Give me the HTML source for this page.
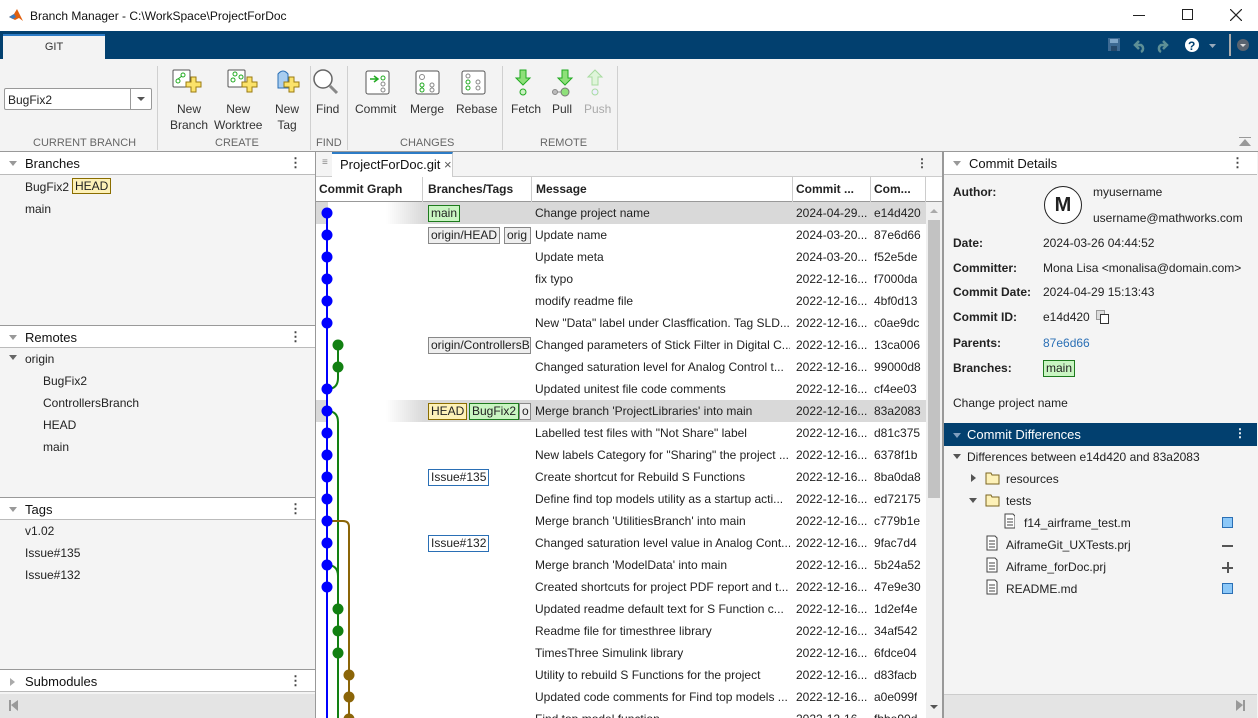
<!DOCTYPE html>
<html><head><meta charset="utf-8"><style>
*{box-sizing:border-box;margin:0;padding:0}
body{width:1258px;height:718px;overflow:hidden;background:#f4f4f4;font-family:"Liberation Sans",sans-serif;font-size:12px;color:#222;position:relative}
.a{position:absolute;white-space:nowrap}
.hdr{position:absolute;background:#fff;border-bottom:1px solid #bbb;height:23px;font-size:13px;color:#111}
.hdr .t{position:absolute;left:25px;top:4px}
.hdr .tri{position:absolute;left:9px;top:9px;width:0;height:0;border-left:4px solid transparent;border-right:4px solid transparent;border-top:5px solid #999}
.hdr .dots{position:absolute;right:14px;top:3px;font-weight:bold;font-size:13px;color:#444;letter-spacing:-1px}
.tb{font-size:12px;text-align:center;color:#333;line-height:16px}
.sec{font-size:11px;color:#666;top:137px}
.sep{position:absolute;top:66px;width:1px;height:84px;background:#d0d0d0}
.row{position:absolute;left:423px;width:503px;height:22px}
.row span{position:absolute;top:4px;white-space:nowrap;overflow:hidden}
.m{left:112px;width:255px}
.d{left:373px}
.i{left:451px}
.tag{position:absolute;top:3px;height:17px;padding:0 2px;border:1px solid #888;background:#eee;line-height:15px;font-size:12px;white-space:nowrap;overflow:hidden}
.g{background:#c9f5c2;border-color:#1d7a1d}
.y{background:#fdf1b8;border-color:#8a6d00}
.b{background:#fff;border-color:#2a6fb5}
.lbl{font-weight:bold;color:#222;font-size:12px}
</style></head><body>
<!-- title bar -->
<div class="a" style="left:0;top:0;width:1258px;height:31px;background:#fff"></div>
<svg class="a" style="left:8px;top:7px" width="16" height="16" viewBox="0 0 16 16"><path d="M1 10 L6 7 L9 2 L15 14 L11 11 L7 13 Z" fill="#e06010"/><path d="M1 10 L6 7 L8 10 L5 12Z" fill="#3a7bbf"/></svg>
<div class="a" style="left:30px;top:9px;font-size:12px;color:#111">Branch Manager - C:\WorkSpace\ProjectForDoc</div>
<div class="a" style="left:1133px;top:15px;width:12px;height:1px;background:#222"></div>
<div class="a" style="left:1182px;top:9px;width:11px;height:11px;border:1px solid #222"></div>
<svg class="a" style="left:1230px;top:9px" width="12" height="12"><path d="M0 0L12 12M12 0L0 12" stroke="#222" stroke-width="1.2"/></svg>
<!-- blue ribbon -->
<div class="a" style="left:0;top:31px;width:1258px;height:28px;background:#02406f"></div>
<div class="a" style="left:3px;top:34px;width:102px;height:25px;background:#f3f3f3;border-top:2px solid #2d7cc6;text-align:center;line-height:22px;font-size:11px;color:#333">GIT</div>
<svg class="a" style="left:1107px;top:37px" width="120" height="16">
<rect x="1" y="1" width="12" height="13" fill="#3d6a93"/><rect x="3" y="2" width="8" height="4" fill="#7fa6c8"/><rect x="4" y="9" width="6" height="5" fill="#25496b"/>
<path d="M32 4 l-4 4 4 4 M28 8 h6 a4 4 0 0 1 0 7" stroke="#5d8f96" stroke-width="2.5" fill="none"/>
<path d="M56 4 l4 4 -4 4 M60 8 h-6 a4 4 0 0 0 0 7" stroke="#5d8f96" stroke-width="2.5" fill="none"/>
<circle cx="85" cy="8" r="7" fill="#fff"/><text x="81" y="13" font-size="12" font-weight="bold" font-family="Liberation Sans" fill="#02406f">?</text>
<path d="M102 7 h7 l-3.5 4z" fill="#9ab"/>
</svg>
<div class="a" style="left:1229px;top:34px;width:2px;height:22px;background:#aaa"></div>
<div class="a" style="left:1237px;top:39px;width:12px;height:12px;border-radius:50%;background:#5a6470"></div>
<div class="a" style="left:1240px;top:44px;border-left:3px solid transparent;border-right:3px solid transparent;border-top:3px solid #ddd"></div>
<!-- toolstrip -->
<div class="a" style="left:0;top:59px;width:1258px;height:93px;background:#f3f3f3;border-bottom:1px solid #999"></div>
<div class="a" style="left:4px;top:88px;width:148px;height:22px;background:#fff;border:1px solid #999;border-radius:2px"></div>
<div class="a" style="left:8px;top:93px;font-size:12px">BugFix2</div>
<div class="a" style="left:130px;top:89px;width:1px;height:20px;background:#999"></div>
<div class="a" style="left:137px;top:97px;border-left:4px solid transparent;border-right:4px solid transparent;border-top:4px solid #555"></div>
<div class="sep" style="left:157px"></div><div class="sep" style="left:310px"></div><div class="sep" style="left:347px"></div><div class="sep" style="left:502px"></div><div class="sep" style="left:617px"></div>
<div class="a sec" style="left:33px">CURRENT BRANCH</div>
<div class="a sec" style="left:215px">CREATE</div>
<div class="a sec" style="left:316px">FIND</div>
<div class="a sec" style="left:400px">CHANGES</div>
<div class="a sec" style="left:540px">REMOTE</div>
<svg class="a" style="left:170px;top:68px" width="450" height="32" viewBox="0 0 450 32">
<g stroke="#555" fill="#fff"><rect x="3" y="2" width="17" height="17" rx="1"/><rect x="58" y="2" width="17" height="17" rx="1"/></g>
<g fill="none" stroke="#2a2"><circle cx="8" cy="13" r="2"/><circle cx="13" cy="7" r="2"/><path d="M8 11 L12 8"/><circle cx="65" cy="6" r="2"/><circle cx="71" cy="9" r="2"/><circle cx="63" cy="12" r="2"/></g>
<path d="M16 14h5v-5h5v5h5v5h-5v5h-5v-5h-5z" fill="#fbe26a" stroke="#9a7a10"/>
<path d="M16 14h5v-5h5v5h5v5h-5v5h-5v-5h-5z" fill="#fbe26a" stroke="#9a7a10" transform="translate(56,0)"/>
<path d="M108 6 q5-6 10 0 v14 h-10z" fill="#a8cdf0" stroke="#2a6fb5"/>
<path d="M16 14h5v-5h5v5h5v5h-5v5h-5v-5h-5z" fill="#fbe26a" stroke="#9a7a10" transform="translate(98,0)"/>
<circle cx="153" cy="11" r="9" fill="#fff" stroke="#666" stroke-width="1.5"/><path d="M160 18 l7 7" stroke="#888" stroke-width="3"/>
<g stroke="#555" fill="#fff"><rect x="196" y="3" width="23" height="23" rx="2"/><rect x="246" y="3" width="23" height="23" rx="2"/><rect x="292" y="3" width="23" height="23" rx="2"/></g>
<path d="M200 11 h7 M204 8 l4 3 -4 3" stroke="#2a2" fill="none" stroke-width="1.5"/>
<g fill="none" stroke="#2a2"><circle cx="213" cy="10" r="2"/><circle cx="252" cy="17" r="2"/><circle cx="252" cy="22" r="2"/><circle cx="298" cy="14" r="2"/><circle cx="298" cy="20" r="2"/></g>
<g fill="none" stroke="#888"><circle cx="213" cy="16" r="2"/><circle cx="213" cy="22" r="2"/><circle cx="252" cy="9" r="2.5"/><circle cx="262" cy="17" r="2"/><circle cx="262" cy="22" r="2"/><circle cx="298" cy="8" r="2"/><circle cx="308" cy="14" r="2"/><circle cx="308" cy="20" r="2"/></g>
<path d="M350 2 h6 v8 h4 l-7 7 -7-7 h4z" fill="#8ee07a" stroke="#2a2"/><circle cx="353" cy="24" r="3" fill="#c8f0c0" stroke="#2a2"/>
<path d="M392 2 h6 v8 h4 l-7 7 -7-7 h4z" fill="#8ee07a" stroke="#2a2"/><circle cx="395" cy="24" r="4" fill="#8ee07a" stroke="#777"/><circle cx="385" cy="24" r="2.5" fill="#bbb" stroke="#888"/><path d="M387 24 h4" stroke="#888"/>
<path d="M422 17 h6 v-8 h4 l-7 -7 -7 7 h4z" fill="#dff5da" stroke="#a8dba0"/><circle cx="425" cy="24" r="3" fill="#eef" stroke="#a8dba0"/>
</svg>
<div class="a tb" style="left:170px;top:101px">New<br>Branch</div>
<div class="a tb" style="left:214px;top:101px">New<br>Worktree</div>
<div class="a tb" style="left:275px;top:101px">New<br>Tag</div>
<div class="a tb" style="left:316px;top:101px">Find</div>
<div class="a tb" style="left:355px;top:101px">Commit</div>
<div class="a tb" style="left:410px;top:101px">Merge</div>
<div class="a tb" style="left:456px;top:101px">Rebase</div>
<div class="a tb" style="left:511px;top:101px">Fetch</div>
<div class="a tb" style="left:552px;top:101px">Pull</div>
<div class="a tb" style="left:584px;top:101px;color:#aaa">Push</div>
<div class="a" style="left:1239px;top:139px;border-left:6px solid transparent;border-right:6px solid transparent;border-bottom:7px solid #999"></div><div class="a" style="left:1239px;top:137px;width:12px;height:1px;background:#999"></div>

<!-- left panel -->
<div class="a" style="left:0;top:152px;width:316px;height:566px;background:#f4f4f4;border-right:1px solid #999"></div>
<div class="hdr" style="left:0;top:152px;width:315px"><div class="tri"></div><div class="t">Branches</div><div class="dots">⋮</div></div>
<div class="a" style="left:25px;top:180px">BugFix2</div><div class="tag y" style="left:72px;top:178px;height:16px;position:absolute">HEAD</div>
<div class="a" style="left:25px;top:202px">main</div>
<div class="hdr" style="left:0;top:325px;width:315px;border-top:1px solid #999"><div class="tri"></div><div class="t">Remotes</div><div class="dots">⋮</div></div>
<div class="a" style="left:9px;top:355px;border-left:4px solid transparent;border-right:4px solid transparent;border-top:5px solid #666"></div>
<div class="a" style="left:25px;top:352px">origin</div>
<div class="a" style="left:43px;top:374px">BugFix2</div>
<div class="a" style="left:43px;top:396px">ControllersBranch</div>
<div class="a" style="left:43px;top:418px">HEAD</div>
<div class="a" style="left:43px;top:440px">main</div>
<div class="hdr" style="left:0;top:497px;width:315px;border-top:1px solid #999"><div class="tri"></div><div class="t">Tags</div><div class="dots">⋮</div></div>
<div class="a" style="left:25px;top:524px">v1.02</div>
<div class="a" style="left:25px;top:546px">Issue#135</div>
<div class="a" style="left:25px;top:568px">Issue#132</div>
<div class="hdr" style="left:0;top:669px;width:315px;border-top:1px solid #999"><div class="a" style="left:10px;top:8px;border-top:4px solid transparent;border-bottom:4px solid transparent;border-left:5px solid #aaa"></div><div class="t">Submodules</div><div class="dots">⋮</div></div>
<div class="a" style="left:0;top:694px;width:315px;height:24px;background:#e4e4e4"></div>
<div class="a" style="left:9px;top:700px;width:2px;height:11px;background:#999"></div><div class="a" style="left:11px;top:700px;border-top:5px solid transparent;border-bottom:6px solid transparent;border-right:7px solid #999"></div>

<!-- middle -->
<div class="a" style="left:316px;top:152px;width:627px;height:566px;background:#fff;border-right:1px solid #999"></div>
<div class="a" style="left:316px;top:152px;width:626px;height:25px;background:#f4f4f4;border-bottom:1px solid #ccc"></div>
<div class="a" style="left:322px;top:157px;color:#888;font-size:10px">≡</div>
<div class="a" style="left:332px;top:152px;width:121px;height:25px;background:#fff;border-top:2px solid #2d7cc6;border-right:1px solid #ccc"></div>
<div class="a" style="left:340px;top:157px;font-size:13px;color:#111">ProjectForDoc.git <span style="color:#555">×</span></div>
<div class="a" style="left:916px;top:156px;font-weight:bold;color:#444">⋮</div>
<div class="a" style="left:316px;top:177px;width:626px;height:25px;background:#fff;border-bottom:1px solid #999"></div>
<div class="a lbl" style="left:319px;top:182px">Commit Graph</div>
<div class="a lbl" style="left:428px;top:182px">Branches/Tags</div>
<div class="a lbl" style="left:536px;top:182px">Message</div>
<div class="a lbl" style="left:796px;top:182px">Commit ...</div>
<div class="a lbl" style="left:874px;top:182px">Com...</div>
<div class="a" style="left:422px;top:177px;width:1px;height:25px;background:#ccc"></div>
<div class="a" style="left:531px;top:177px;width:1px;height:25px;background:#ccc"></div>
<div class="a" style="left:792px;top:177px;width:1px;height:25px;background:#ccc"></div>
<div class="a" style="left:870px;top:177px;width:1px;height:25px;background:#ccc"></div>
<div class="a" style="left:925px;top:177px;width:1px;height:25px;background:#ccc"></div>
<!-- selected rows -->
<div class="a" style="left:316px;top:202px;width:610px;height:22px;background:linear-gradient(90deg,#fff 0,#fff 70px,#d9d9d9 108px)"></div>
<div class="a" style="left:316px;top:400px;width:610px;height:22px;background:linear-gradient(90deg,#fff 0,#fff 70px,#d9d9d9 108px)"></div>
<div class="a" style="left:316px;top:202px;width:12px;height:22px;background:#d9d9d9"></div>
<div class="a" style="left:316px;top:400px;width:12px;height:22px;background:#d9d9d9"></div>
<!-- scrollbar -->
<div class="a" style="left:926px;top:202px;width:16px;height:516px;background:#f0f0f0"></div>
<div class="a" style="left:928px;top:220px;width:12px;height:278px;background:#c2c2c2"></div>
<div class="a" style="left:930px;top:209px;border-left:4px solid transparent;border-right:4px solid transparent;border-bottom:4px solid #aaa"></div>
<div class="a" style="left:930px;top:705px;border-left:4px solid transparent;border-right:4px solid transparent;border-top:4px solid #555"></div>
<!-- graph -->
<svg class="a" style="left:316px;top:202px" width="106" height="516">
<g fill="none" stroke-width="2">
<path d="M11 11 V516" stroke="#0000ff"/>
<path d="M22 143 V176 Q22 187 11 187" stroke="#128012"/>
<path d="M11 209 Q22 209 22 220 V516" stroke="#128012"/>
<path d="M11 363 Q22 363 22 374" stroke="#128012"/>
<path d="M11 319 H27 Q33 319 33 325 V516" stroke="#8b6508"/>
</g>
<g fill="#0000ff"><circle cx="11" cy="11" r="5.5"/><circle cx="11" cy="33" r="5.5"/><circle cx="11" cy="55" r="5.5"/><circle cx="11" cy="77" r="5.5"/><circle cx="11" cy="99" r="5.5"/><circle cx="11" cy="121" r="5.5"/><circle cx="11" cy="187" r="5.5"/><circle cx="11" cy="209" r="5.5"/><circle cx="11" cy="231" r="5.5"/><circle cx="11" cy="253" r="5.5"/><circle cx="11" cy="275" r="5.5"/><circle cx="11" cy="297" r="5.5"/><circle cx="11" cy="319" r="5.5"/><circle cx="11" cy="341" r="5.5"/><circle cx="11" cy="363" r="5.5"/><circle cx="11" cy="385" r="5.5"/></g>
<g fill="#128012"><circle cx="22" cy="143" r="5.5"/><circle cx="22" cy="165" r="5.5"/><circle cx="22" cy="407" r="5.5"/><circle cx="22" cy="429" r="5.5"/><circle cx="22" cy="451" r="5.5"/></g>
<g fill="#8b6508"><circle cx="33" cy="473" r="5.5"/><circle cx="33" cy="495" r="5.5"/><circle cx="33" cy="517" r="5.5"/></g>
</svg>
<!-- rows -->
<div class="row" style="top:202px"><div class="tag g" style="left:5px">main</div><span class="m">Change project name</span><span class="d">2024-04-29...</span><span class="i">e14d420</span></div>
<div class="row" style="top:224px"><div class="tag" style="left:5px">origin/HEAD</div><div class="tag" style="left:81px;width:27px">orig</div><span class="m">Update name</span><span class="d">2024-03-20...</span><span class="i">87e6d66</span></div>
<div class="row" style="top:246px"><span class="m">Update meta</span><span class="d">2024-03-20...</span><span class="i">f52e5de</span></div>
<div class="row" style="top:268px"><span class="m">fix typo</span><span class="d">2022-12-16...</span><span class="i">f7000da</span></div>
<div class="row" style="top:290px"><span class="m">modify readme file</span><span class="d">2022-12-16...</span><span class="i">4bf0d13</span></div>
<div class="row" style="top:312px"><span class="m">New "Data" label under Clasffication. Tag SLD...</span><span class="d">2022-12-16...</span><span class="i">c0ae9dc</span></div>
<div class="row" style="top:334px"><div class="tag" style="left:5px;width:103px">origin/ControllersBranch</div><span class="m">Changed parameters of Stick Filter in Digital C...</span><span class="d">2022-12-16...</span><span class="i">13ca006</span></div>
<div class="row" style="top:356px"><span class="m">Changed saturation level for Analog Control t...</span><span class="d">2022-12-16...</span><span class="i">99000d8</span></div>
<div class="row" style="top:378px"><span class="m">Updated unitest file code comments</span><span class="d">2022-12-16...</span><span class="i">cf4ee03</span></div>
<div class="row" style="top:400px"><div class="tag y" style="left:5px">HEAD</div><div class="tag g" style="left:46px">BugFix2</div><div class="tag" style="left:96px;width:12px">o</div><span class="m">Merge branch 'ProjectLibraries' into main</span><span class="d">2022-12-16...</span><span class="i">83a2083</span></div>
<div class="row" style="top:422px"><span class="m">Labelled test files with "Not Share" label</span><span class="d">2022-12-16...</span><span class="i">d81c375</span></div>
<div class="row" style="top:444px"><span class="m">New labels Category for "Sharing" the project ...</span><span class="d">2022-12-16...</span><span class="i">6378f1b</span></div>
<div class="row" style="top:466px"><div class="tag b" style="left:5px">Issue#135</div><span class="m">Create shortcut for Rebuild S Functions</span><span class="d">2022-12-16...</span><span class="i">8ba0da8</span></div>
<div class="row" style="top:488px"><span class="m">Define find top models utility as a startup acti...</span><span class="d">2022-12-16...</span><span class="i">ed72175</span></div>
<div class="row" style="top:510px"><span class="m">Merge branch 'UtilitiesBranch' into main</span><span class="d">2022-12-16...</span><span class="i">c779b1e</span></div>
<div class="row" style="top:532px"><div class="tag b" style="left:5px">Issue#132</div><span class="m">Changed saturation level value in Analog Cont...</span><span class="d">2022-12-16...</span><span class="i">9fac7d4</span></div>
<div class="row" style="top:554px"><span class="m">Merge branch 'ModelData' into main</span><span class="d">2022-12-16...</span><span class="i">5b24a52</span></div>
<div class="row" style="top:576px"><span class="m">Created shortcuts for project PDF report and t...</span><span class="d">2022-12-16...</span><span class="i">47e9e30</span></div>
<div class="row" style="top:598px"><span class="m">Updated readme default text for S Function c...</span><span class="d">2022-12-16...</span><span class="i">1d2ef4e</span></div>
<div class="row" style="top:620px"><span class="m">Readme file for timesthree library</span><span class="d">2022-12-16...</span><span class="i">34af542</span></div>
<div class="row" style="top:642px"><span class="m">TimesThree Simulink library</span><span class="d">2022-12-16...</span><span class="i">6fdce04</span></div>
<div class="row" style="top:664px"><span class="m">Utility to rebuild S Functions for the project</span><span class="d">2022-12-16...</span><span class="i">d83facb</span></div>
<div class="row" style="top:686px"><span class="m">Updated code comments for Find top models ...</span><span class="d">2022-12-16...</span><span class="i">a0e099f</span></div>
<div class="row" style="top:708px;height:10px;overflow:hidden"><span class="m">Find top model function</span><span class="d">2022-12-16...</span><span class="i">fbbe90d</span></div>

<!-- right panel -->
<div class="a" style="left:943px;top:152px;width:315px;height:566px;background:#f4f4f4;border-left:1px solid #999"></div>
<div class="hdr" style="left:944px;top:152px;width:313px"><div class="tri"></div><div class="t">Commit Details</div><div class="dots">⋮</div></div>
<div class="a lbl" style="left:953px;top:185px">Author:</div>
<div class="a" style="left:1044px;top:186px;width:38px;height:38px;border:1.5px solid #222;border-radius:50%;text-align:center;line-height:36px;font-weight:bold;font-size:20px;background:#fff">M</div>
<div class="a" style="left:1093px;top:185px">myusername</div>
<div class="a" style="left:1093px;top:211px">username@mathworks.com</div>
<div class="a lbl" style="left:953px;top:236px">Date:</div><div class="a" style="left:1043px;top:236px">2024-03-26 04:44:52</div>
<div class="a lbl" style="left:953px;top:261px">Committer:</div><div class="a" style="left:1043px;top:261px">Mona Lisa &lt;monalisa@domain.com&gt;</div>
<div class="a lbl" style="left:953px;top:285px">Commit Date:</div><div class="a" style="left:1043px;top:285px">2024-04-29 15:13:43</div>
<div class="a lbl" style="left:953px;top:310px">Commit ID:</div><div class="a" style="left:1043px;top:310px">e14d420</div>
<div class="a" style="left:1096px;top:310px;width:9px;height:10px;border:1px solid #999;background:#ddd"></div><div class="a" style="left:1100px;top:314px;width:9px;height:10px;border:1px solid #333;background:#fff"></div>
<div class="a lbl" style="left:953px;top:336px">Parents:</div><div class="a" style="left:1043px;top:336px;color:#2a6fb5">87e6d66</div>
<div class="a lbl" style="left:953px;top:361px">Branches:</div><div class="tag g" style="left:1043px;top:360px;height:17px;position:absolute">main</div>
<div class="a" style="left:953px;top:396px">Change project name</div>
<div class="a" style="left:944px;top:423px;width:313px;height:23px;background:#02406f"></div>
<div class="a" style="left:953px;top:433px;border-left:4px solid transparent;border-right:4px solid transparent;border-top:5px solid #7f9fbf"></div>
<div class="a" style="left:967px;top:427px;color:#fff;font-size:13px">Commit Differences</div>
<div class="a" style="left:1234px;top:426px;color:#fff;font-weight:bold">⋮</div>
<div class="a" style="left:953px;top:454px;border-left:4px solid transparent;border-right:4px solid transparent;border-top:5px solid #555"></div>
<div class="a" style="left:967px;top:450px">Differences between e14d420 and 83a2083</div>
<div class="a" style="left:971px;top:474px;border-top:4px solid transparent;border-bottom:4px solid transparent;border-left:5px solid #555"></div>
<div class="a" style="left:969px;top:498px;border-left:4px solid transparent;border-right:4px solid transparent;border-top:5px solid #555"></div>
<svg class="a" style="left:985px;top:470px" width="30" height="130">
<path d="M1 3 h5 l1 2 h7 v9 h-13z" fill="#fdf1b8" stroke="#7a6520"/>
<path d="M1 25 h5 l1 2 h7 v9 h-13z" fill="#fdf1b8" stroke="#7a6520"/>
<g fill="#fff" stroke="#444"><path d="M20 44 h8 l2 2 v12 h-10z"/><path d="M2 66 h8 l2 2 v12 h-10z"/><path d="M2 88 h8 l2 2 v12 h-10z"/><path d="M2 110 h8 l2 2 v12 h-10z"/></g>
<g stroke="#444"><path d="M22 49h6M22 52h6M22 55h6M4 71h6M4 74h6M4 77h6M4 93h6M4 96h6M4 99h6M4 115h6M4 118h6M4 121h6"/></g>
</svg>
<div class="a" style="left:1006px;top:472px">resources</div>
<div class="a" style="left:1006px;top:494px">tests</div>
<div class="a" style="left:1024px;top:516px">f14_airframe_test.m</div>
<div class="a" style="left:1006px;top:538px">AiframeGit_UXTests.prj</div>
<div class="a" style="left:1006px;top:560px">Aiframe_forDoc.prj</div>
<div class="a" style="left:1006px;top:582px">README.md</div>
<div class="a" style="left:1222px;top:517px;width:11px;height:11px;background:#8cc8f8;border:1px solid #2a6fb5"></div>
<div class="a" style="left:1222px;top:545px;width:11px;height:2px;background:#555"></div>
<div class="a" style="left:1222px;top:567px;width:11px;height:2px;background:#555"></div><div class="a" style="left:1227px;top:562px;width:2px;height:11px;background:#555"></div>
<div class="a" style="left:1222px;top:583px;width:11px;height:11px;background:#8cc8f8;border:1px solid #2a6fb5"></div>
<div class="a" style="left:944px;top:694px;width:313px;height:24px;background:#e4e4e4;border-top:1px solid #ccc"></div>
<div class="a" style="left:1243px;top:700px;width:2px;height:11px;background:#999"></div><div class="a" style="left:1236px;top:700px;border-top:5px solid transparent;border-bottom:6px solid transparent;border-left:7px solid #999"></div>
</body></html>
